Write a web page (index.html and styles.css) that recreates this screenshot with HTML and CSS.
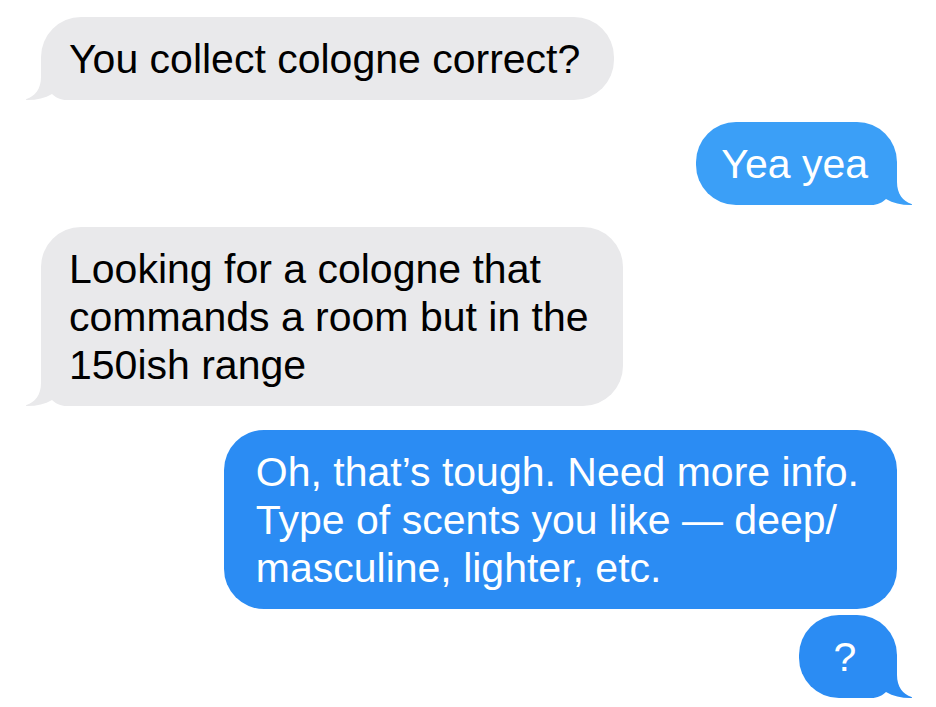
FILE: index.html
```html
<!DOCTYPE html>
<html lang="en">
<head>
<meta charset="utf-8">
<title>Messages</title>
<link rel="stylesheet" href="styles.css">
</head>
<body>
<main class="thread">
  <div class="bubble recv gray">
    <p class="text">You collect cologne correct?</p>
    <svg class="tail" width="56" height="40" viewBox="0 0 56 40" aria-hidden="true"><path d="M16 0 L16 17 C16 29 10 36 1.5 39 C0.5 39.4 0.8 40 2.5 40 C12 40 20 38 27 34 C31 37.5 35 40 42 40 L56 40 L56 0 Z"/></svg>
  </div>
  <div class="bubble sent light">
    <p class="text">Yea yea</p>
    <svg class="tail" width="56" height="40" viewBox="0 0 56 40" aria-hidden="true"><path d="M16 0 L16 17 C16 29 10 36 1.5 39 C0.5 39.4 0.8 40 2.5 40 C12 40 20 38 27 34 C31 37.5 35 40 42 40 L56 40 L56 0 Z"/></svg>
  </div>
  <div class="bubble recv gray">
    <p class="text">Looking for a cologne that<br>commands a room but in the<br>150ish range</p>
    <svg class="tail" width="56" height="40" viewBox="0 0 56 40" aria-hidden="true"><path d="M16 0 L16 17 C16 29 10 36 1.5 39 C0.5 39.4 0.8 40 2.5 40 C12 40 20 38 27 34 C31 37.5 35 40 42 40 L56 40 L56 0 Z"/></svg>
  </div>
  <div class="bubble sent deep">
    <p class="text">Oh, that’s tough. Need more info.<br>Type of scents you like — deep/<br>masculine, lighter, etc.</p>
  </div>
  <div class="bubble sent deep same">
    <p class="text">?</p>
    <svg class="tail" width="56" height="40" viewBox="0 0 56 40" aria-hidden="true"><path d="M16 0 L16 17 C16 29 10 36 1.5 39 C0.5 39.4 0.8 40 2.5 40 C12 40 20 38 27 34 C31 37.5 35 40 42 40 L56 40 L56 0 Z"/></svg>
  </div>
</main>
</body>
</html>
```
FILE: styles.css
```css
* {
  box-sizing: border-box;
}

html,
body {
  margin: 0;
  background: #ffffff;
}

body {
  font-family: "Liberation Sans", Arial, Helvetica, sans-serif;
  width: 936px;
  height: 707px;
  overflow: hidden;
}

.thread {
  display: flex;
  flex-direction: column;
  align-items: flex-start;
  padding: 17px 39px 0 41px;
}

.bubble {
  position: relative;
  min-width: 98px;
  padding: 17.5px 34px 17.5px 28px;
  border-radius: 40px;
  margin-top: 22px;
}

.bubble:first-child {
  margin-top: 0;
}

.text {
  position: relative;
  z-index: 1;
  margin: 0;
  font-size: 41px;
  line-height: 48px;
  white-space: nowrap;
  text-align: left;
}

.recv {
  align-self: flex-start;
}

.sent {
  align-self: flex-end;
  padding: 17.5px 38px 17.5px 32px;
}

.sent.light {
  padding-left: 25px;
  padding-right: 29px;
}

.recv + .sent.deep {
  margin-top: 24px;
}

.deep.same {
  margin-top: 6px;
}

.gray {
  background: #e9e9eb;
  color: #000000;
}

.gray .tail path {
  fill: #e9e9eb;
}

.light {
  background: #3b9ff7;
  color: #ffffff;
}

.light .tail path {
  fill: #3b9ff7;
}

.deep {
  background: #2b8cf3;
  color: #ffffff;
}

.deep .tail path {
  fill: #2b8cf3;
}

.tail {
  position: absolute;
  bottom: 0;
  z-index: 0;
  display: block;
}

.recv .tail {
  left: -16px;
}

.sent .tail {
  right: -16px;
  transform: scaleX(-1);
}

.sent.same .text {
  text-align: center;
}
```
